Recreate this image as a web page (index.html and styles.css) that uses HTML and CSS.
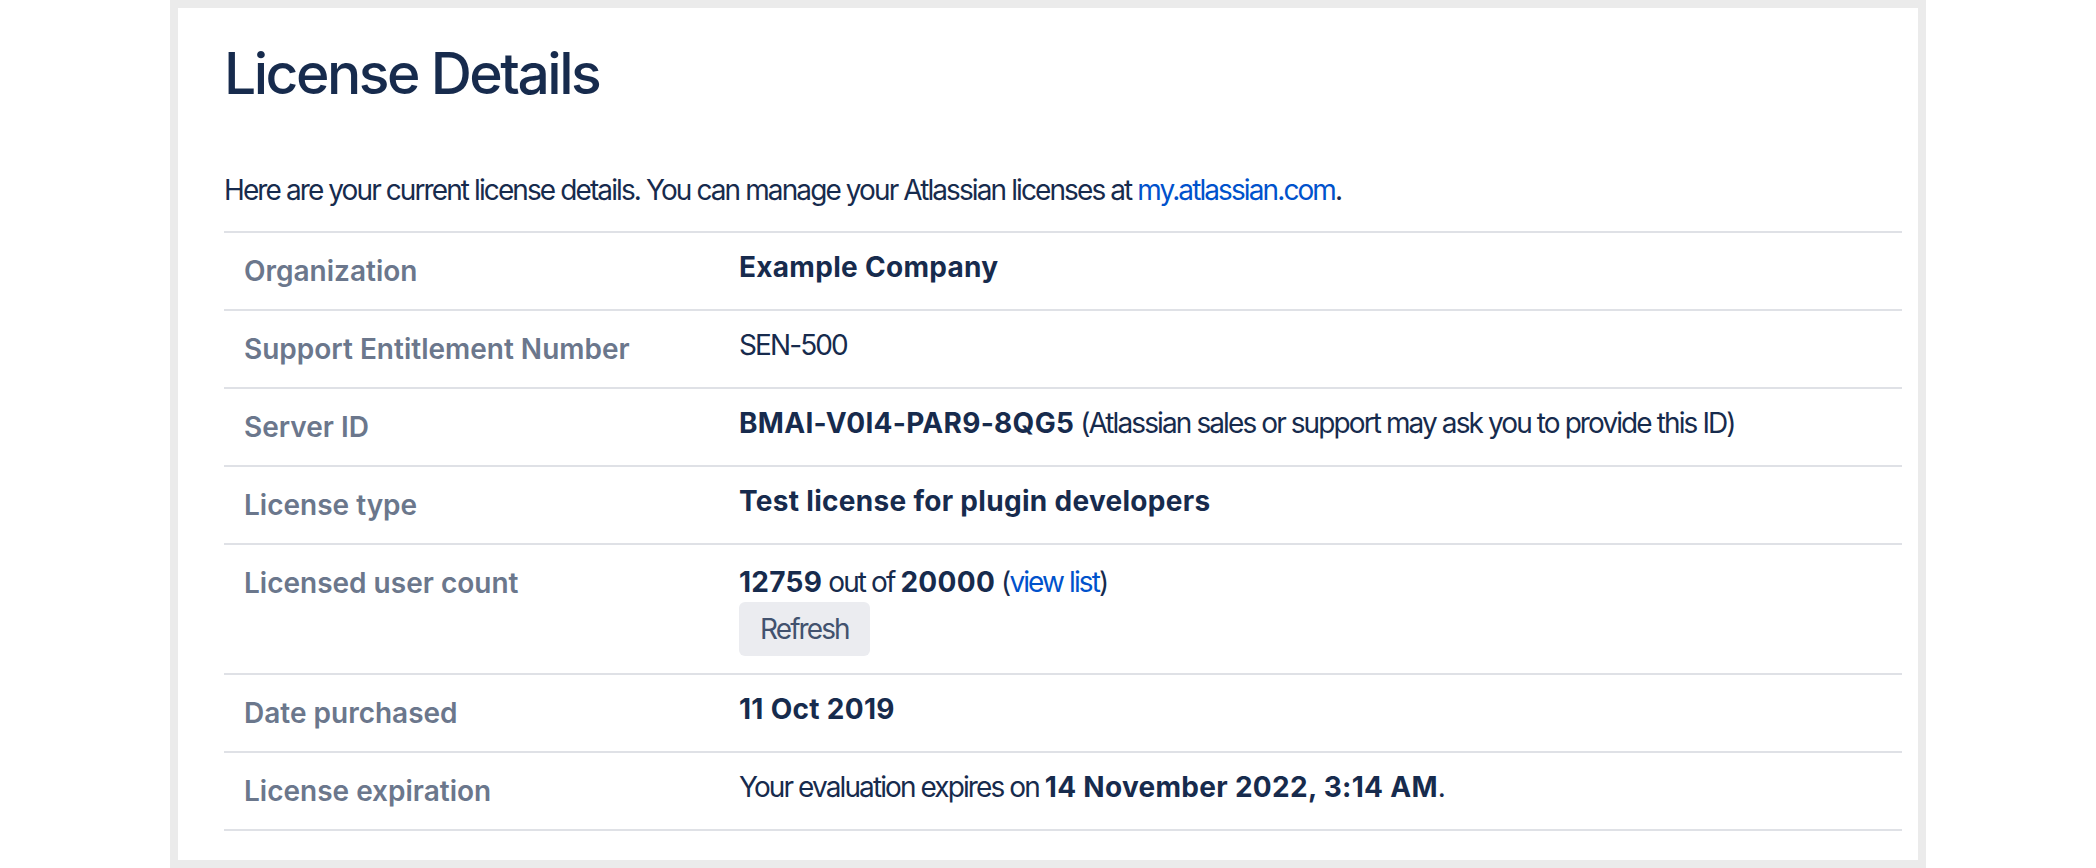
FILE: index.html
```html
<!DOCTYPE html>
<html lang="en">
<head>
<meta charset="utf-8">
<title>License Details</title>
<link rel="stylesheet" href="styles.css">
</head>
<body>
<div class="frame">
  <main class="card">
    <h1 class="title">License Details</h1>
    <p class="intro">Here are your current license details. You can manage your Atlassian licenses at <a class="link" href="#">my.atlassian.com</a>.</p>
    <div class="details">
      <div class="row">
        <div class="label">Organization</div>
        <div class="value"><strong>Example Company</strong></div>
      </div>
      <div class="row">
        <div class="label">Support Entitlement Number</div>
        <div class="value">SEN-500</div>
      </div>
      <div class="row">
        <div class="label">Server ID</div>
        <div class="value"><strong>BMAI-V0I4-PAR9-8QG5</strong> (Atlassian sales or support may ask you to provide this ID)</div>
      </div>
      <div class="row">
        <div class="label">License type</div>
        <div class="value"><strong>Test license for plugin developers</strong></div>
      </div>
      <div class="row">
        <div class="label">Licensed user count</div>
        <div class="value">
          <div class="count"><strong>12759</strong> out of <strong>20000</strong> (<a class="link" href="#">view list</a>)</div>
          <button class="btn" type="button">Refresh</button>
        </div>
      </div>
      <div class="row">
        <div class="label">Date purchased</div>
        <div class="value"><strong>11 Oct 2019</strong></div>
      </div>
      <div class="row">
        <div class="label">License expiration</div>
        <div class="value">Your evaluation expires on <strong>14 November 2022, 3:14 AM</strong>.</div>
      </div>
    </div>
  </main>
</div>
</body>
</html>
```
FILE: styles.css
```css
html, body {
  margin: 0;
  padding: 0;
  background: #ffffff;
}
body {
  font-family: Inter, "Noto Sans", "Liberation Sans", sans-serif;
  color: #172B4D;
  font-size: 28px;
  line-height: 40px;
  letter-spacing: -1.9px;
}
.frame {
  margin-left: 170px;
  width: 1756px;
  height: 868px;
  box-sizing: border-box;
  padding: 8px;
  background: #ebebeb;
}
.card {
  height: 852px;
  box-sizing: border-box;
  background: #ffffff;
  padding: 34px 16px 0 46px;
}
.title {
  margin: 0;
  font-size: 57px;
  line-height: 64px;
  font-weight: 500;
  color: #172B4D;
  letter-spacing: -2.5px;
}
.intro {
  margin: 64px 0 21px 0;
}
.link {
  color: #0052CC;
  text-decoration: none;
}
.details {
  border-bottom: 2px solid #DFE1E6;
}
.row {
  display: grid;
  grid-template-columns: 495px 1fr;
  border-top: 2px solid #DFE1E6;
}
.label {
  padding: 18px 20px 18px 20px;
  color: #6B778C;
  font-weight: 600;
  letter-spacing: 0;
}
.value {
  padding: 14px 20px 17px 20px;
}
.value strong {
  font-weight: 700;
  letter-spacing: 0.3px;
}
.count {
  margin-top: 3px;
}
.btn {
  display: block;
  height: 54px;
  padding: 0 21px;
  border: none;
  border-radius: 6px;
  background: #EBECF0;
  color: #42526E;
  font-family: inherit;
  font-size: 28px;
  line-height: 54px;
  letter-spacing: -1.9px;
}
```
